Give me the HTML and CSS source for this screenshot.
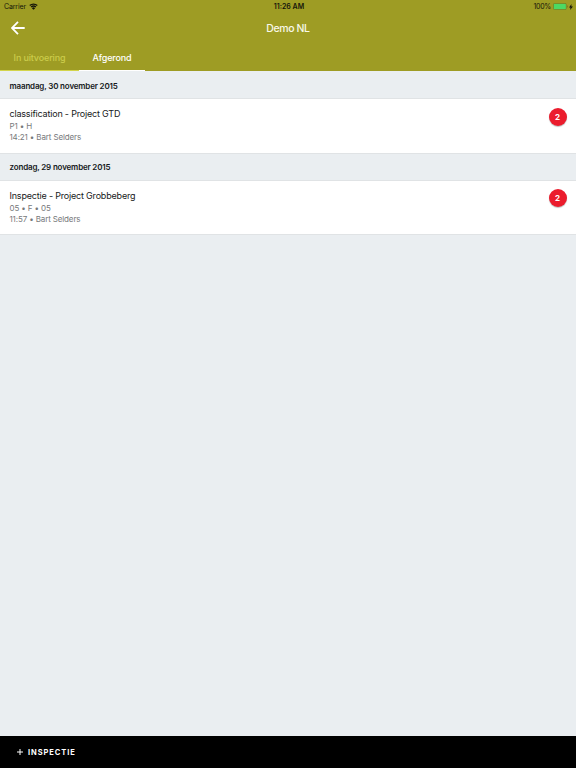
FILE: index.html
```html
<!DOCTYPE html>
<html lang="nl">
<head>
  <meta charset="UTF-8">
  <title>Demo NL</title>
  <link rel="stylesheet" href="styles.css">
</head>
<body>
  <header class="header">
    <div class="status-bar">
      <div class="status-left">
        <span class="carrier">Carrier</span>
        <svg class="wifi" width="9" height="7" viewBox="0 0 18 14">
          <path d="M1.5 5.2a10.8 10.8 0 0 1 15 0M4.3 8.2a6.7 6.7 0 0 1 9.4 0" fill="none" stroke="#15150a" stroke-width="2.7"/>
          <path d="M9 13.5L5.8 10.3a4.5 4.5 0 0 1 6.4 0z" fill="#15150a"/>
        </svg>
      </div>
      <span class="clock">11:26 AM</span>
      <div class="status-right">
        <span class="percent">100%</span>
        <svg class="battery" width="15" height="7" viewBox="0 0 15 7">
          <rect x="0.4" y="0.4" width="12.9" height="6.2" rx="1.2" fill="#4cd964" stroke="#77751c" stroke-width="0.7"/>
          <path d="M14 2.3q.8.3.8 1.2t-.8 1.2z" fill="#77751c"/>
        </svg>
        <svg class="bolt" width="4" height="6" viewBox="0 0 4 6">
          <path d="M2.5 0L0 3.4h1.5L1.1 6 4 2.4H2.3z" fill="#15150a"/>
        </svg>
      </div>
    </div>
    <div class="nav-bar">
      <a class="back" href="#">
        <svg width="14" height="14" viewBox="0 0 14 14">
          <path d="M7 .8L.9 7 7 13.2M1 7h12.7" fill="none" stroke="#fff" stroke-width="1.8"/>
        </svg>
      </a>
      <h1 class="title">Demo NL</h1>
    </div>
    <nav class="tabs">
      <a class="tab" href="#">In uitvoering</a>
      <a class="tab active" href="#">Afgerond</a>
    </nav>
  </header>

  <main class="list">
    <h2 class="date">maandag, 30 november 2015</h2>
    <div class="item">
      <div class="item-text">
        <p class="name">classification - Project GTD</p>
        <p class="meta">P1 • H</p>
        <p class="meta">14:21 • Bart Selders</p>
      </div>
      <span class="badge">2</span>
    </div>
    <h2 class="date">zondag, 29 november 2015</h2>
    <div class="item">
      <div class="item-text">
        <p class="name">Inspectie - Project Grobbeberg</p>
        <p class="meta">05 • F • 05</p>
        <p class="meta">11:57 • Bart Selders</p>
      </div>
      <span class="badge">2</span>
    </div>
  </main>

  <footer class="footer">
    <svg class="plus" width="6" height="6" viewBox="0 0 6 6">
      <path d="M3 0v6M0 3h6" stroke="#fff" stroke-width="1"/>
    </svg>
    <span>INSPECTIE</span>
  </footer>
</body>
</html>
```

FILE: styles.css
```css
* {
  box-sizing: border-box;
}

body {
  margin: 0;
  height: 100vh;
  display: flex;
  flex-direction: column;
  font-family: Inter, "Liberation Sans", sans-serif;
  background: #eaeef1;
  overflow: hidden;
}

h1, h2, p {
  margin: 0;
}

a {
  text-decoration: none;
}

.header {
  height: 71px;
  background: #9e9c24;
}

.status-bar {
  display: grid;
  grid-template-columns: 1fr auto 1fr;
  align-items: center;
  height: 12px;
  padding: 0 3px 0 4px;
  font-size: 7px;
  line-height: 13px;
  color: #15150a;
}

.status-left,
.status-right {
  display: flex;
  align-items: center;
}

.status-left {
  gap: 3px;
}

.carrier {
  letter-spacing: -0.15px;
}

.status-right {
  justify-content: flex-end;
  gap: 2px;
}

.percent {
  letter-spacing: -0.25px;
}

.battery {
  margin-right: -1px;
}

.clock {
  padding-left: 1px;
  font-weight: 600;
}

.nav-bar {
  display: grid;
  grid-template-columns: 1fr auto 1fr;
  align-items: center;
  height: 31px;
  padding: 0 11px;
}

.back {
  display: flex;
}

.title {
  padding-top: 1px;
  font-size: 10.5px;
  font-weight: 500;
  letter-spacing: -0.4px;
  color: #f8f8e8;
}

.tabs {
  display: flex;
  height: 28px;
}

.tab {
  width: 79px;
  padding-top: 8px;
  border-bottom: 1px solid #d3d44b;
  font-size: 9px;
  line-height: 14px;
  font-weight: 500;
  letter-spacing: -0.15px;
  text-align: center;
  color: #cbcc4b;
}

.tab.active {
  width: 66px;
  border-color: #fff;
  color: #fff;
}

.list {
  flex: 1;
}

.date {
  height: 28px;
  padding: 0.6px 9.5px 0;
  font-size: 8px;
  line-height: 29.5px;
  font-weight: 600;
  letter-spacing: -0.17px;
  color: #16191b;
}

.item {
  display: flex;
  justify-content: space-between;
  height: 53.5px;
  padding: 8.3px 9.5px 0;
  background: #fff;
  box-shadow: 0 0 0 1px #e0e3e5;
}

.name {
  margin-bottom: 0.9px;
  font-size: 9px;
  line-height: 13px;
  letter-spacing: -0.19px;
  color: #17191a;
}

.meta {
  font-size: 8px;
  line-height: 11.2px;
  letter-spacing: -0.13px;
  color: #77797b;
}

.badge {
  width: 18px;
  height: 18px;
  margin-top: 0.3px;
  border-radius: 50%;
  background: #eb1c2d;
  font-size: 8px;
  line-height: 18px;
  font-weight: 700;
  text-align: center;
  color: #fff;
  box-shadow: 0 1px 1px rgba(0, 0, 0, 0.25);
}

.footer {
  display: flex;
  align-items: center;
  gap: 5px;
  height: 32px;
  padding-left: 17px;
  background: #000;
  font-size: 7.5px;
  font-weight: 700;
  letter-spacing: 0.93px;
  color: #fff;
}
```
